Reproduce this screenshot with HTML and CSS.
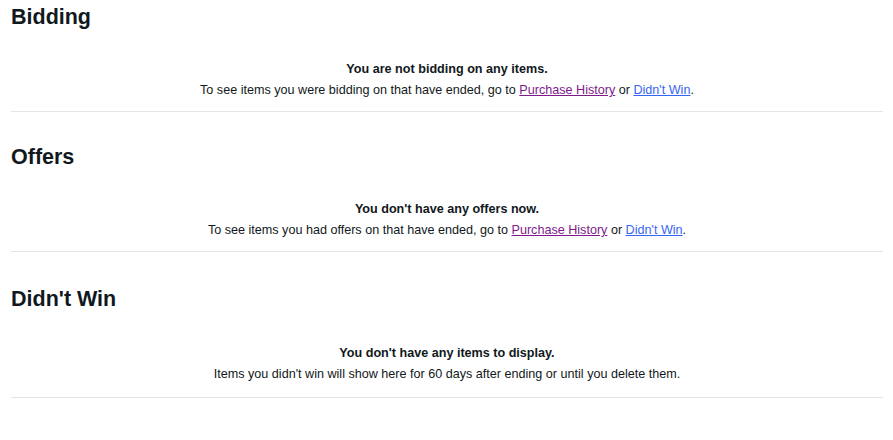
FILE: index.html
```html
<!DOCTYPE html>
<html lang="en">
<head>
  <meta charset="UTF-8">
  <meta name="viewport" content="width=device-width, initial-scale=1.0">
  <title>Bids &amp; Offers</title>
  <link rel="stylesheet" href="styles.css">
</head>
<body>

<div class="container">

  <!-- Bidding -->
  <section class="module">
    <h2>Bidding</h2>
    <div class="empty">
      <p class="empty-title">You are not bidding on any items.</p>
      <p>To see items you were bidding on that have ended, go to <a href="#" class="visited">Purchase History</a> or <a href="#">Didn't Win</a>.</p>
    </div>
  </section>

  <!-- Offers -->
  <section class="module">
    <h2>Offers</h2>
    <div class="empty">
      <p class="empty-title">You don't have any offers now.</p>
      <p>To see items you had offers on that have ended, go to <a href="#" class="visited">Purchase History</a> or <a href="#">Didn't Win</a>.</p>
    </div>
  </section>

  <!-- Didn't Win -->
  <section class="module module-lost">
    <h2>Didn't Win</h2>
    <div class="empty">
      <p class="empty-title">You don't have any items to display.</p>
      <p>Items you didn't win will show here for 60 days after ending or until you delete them.</p>
    </div>
  </section>

</div>

</body>
</html>
```
FILE: styles.css
```css
body {
  margin: 0;
  padding: 0;
  font-family: Arial, "Liberation Sans", sans-serif;
  background: #ffffff;
  color: #111820;
}
.container {
  margin: 0 10px 0 11px;
  padding-top: 5px;
}
.module {
  margin-bottom: 33px;
}
.module-lost {
  margin-top: 35px;
}
h2 {
  margin: 0;
  font-size: 21.5px;
  line-height: 24px;
  font-weight: bold;
}
.empty {
  padding: 30px 0 10px;
  text-align: center;
  font-size: 12.6px;
  line-height: 21px;
  border-bottom: 1px solid #e5e5e5;
}
.module-lost .empty {
  padding: 32px 0 12px;
}
.empty p {
  margin: 0;
}
.empty-title {
  font-weight: bold;
}
a {
  color: #3665f3;
}
a.visited {
  color: #7e1a8a;
}
```
